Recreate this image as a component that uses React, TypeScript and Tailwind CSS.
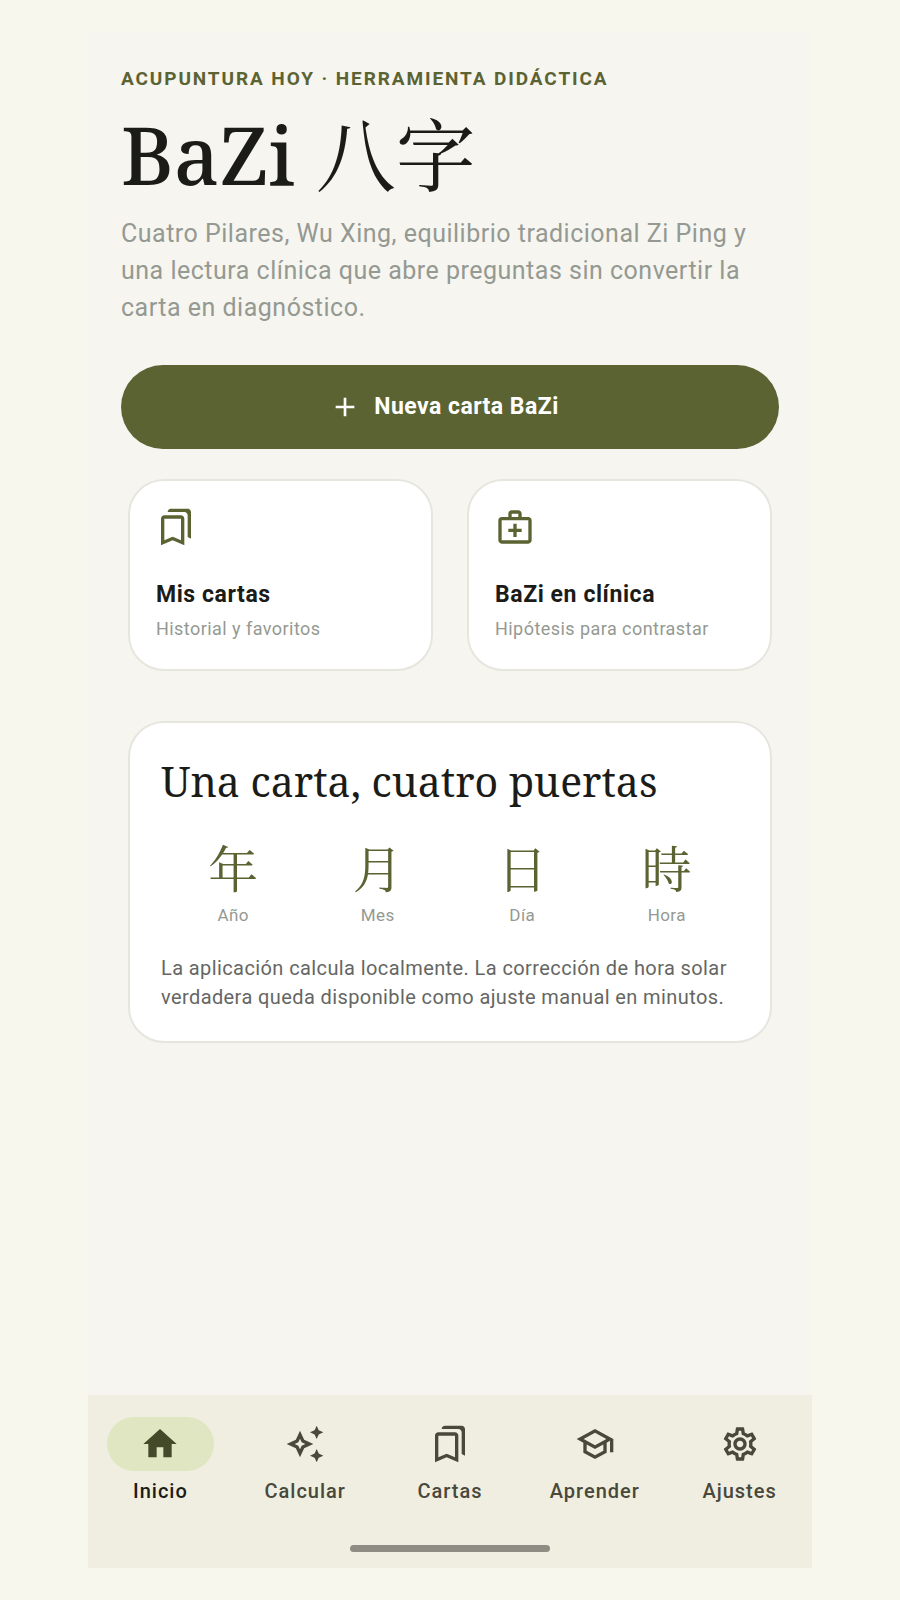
import type { IconType } from "react-icons";
import {
  MdAdd,
  MdHome,
  MdOutlineAutoAwesome,
  MdOutlineBookmarks,
  MdOutlineMedicalServices,
  MdOutlineSchool,
  MdOutlineSettings,
} from "react-icons/md";

const serif =
  "font-['Noto_Serif','Droid_Serif','DejaVu_Serif','Noto_Serif_CJK_SC','Noto_Sans_CJK_SC',serif]";

const pillars = [
  { glyph: "年", label: "Año" },
  { glyph: "月", label: "Mes" },
  { glyph: "日", label: "Día" },
  { glyph: "時", label: "Hora" },
];

const tabs: { icon: IconType; label: string; active?: boolean }[] = [
  { icon: MdHome, label: "Inicio", active: true },
  { icon: MdOutlineAutoAwesome, label: "Calcular" },
  { icon: MdOutlineBookmarks, label: "Cartas" },
  { icon: MdOutlineSchool, label: "Aprender" },
  { icon: MdOutlineSettings, label: "Ajustes" },
];

type ShortcutProps = {
  icon: IconType;
  title: string;
  subtitle: string;
};

const Shortcut = ({ icon: Icon, title, subtitle }: ShortcutProps) => {
  return (
    <button
      type="button"
      className="flex flex-1 flex-col items-start rounded-[36px] border-2 border-[#e6e6df] bg-white p-[26px] text-left"
    >
      <Icon className="size-10 text-[#5b6333]" />
      <span className="mt-8 text-[23px] font-bold leading-8 tracking-wide text-[#1b1c18]">
        {title}
      </span>
      <span className="mt-1 text-lg leading-7 tracking-wide text-[#949992]">{subtitle}</span>
    </button>
  );
};

const PillarsCard = () => {
  return (
    <section className="mx-[7px] mt-[50px] rounded-[36px] border-2 border-[#e6e6df] bg-white px-[31px] pb-[29px] pt-8">
      <h2 className={`text-[41px] leading-[52px] text-[#1b1c18] ${serif}`}>
        Una carta, cuatro puertas
      </h2>
      <ul className="mt-[30px] grid grid-cols-4">
        {pillars.map((p) => (
          <li key={p.label} className="flex flex-col items-center">
            <span lang="zh-Hans" className={`text-[50px] leading-[64px] text-[#5b6333] ${serif}`}>
              {p.glyph}
            </span>
            <span className="mt-0.5 text-[17px] leading-6 tracking-wide text-[#949992]">
              {p.label}
            </span>
          </li>
        ))}
      </ul>
      <p className="mt-[27px] text-xl leading-[29px] tracking-[0.02em] text-[#656663]">
        La aplicación calcula localmente. La corrección de hora solar verdadera queda disponible
        como ajuste manual en minutos.
      </p>
    </section>
  );
};

const BottomNav = () => {
  return (
    <nav className="bg-[#f0eee1] pb-4 pt-[22px]">
      <div className="grid grid-cols-5">
        {tabs.map(({ icon: Icon, label, active }) => (
          <a
            key={label}
            href={`#${label.toLowerCase()}`}
            aria-current={active ? "page" : undefined}
            className="flex flex-col items-center"
          >
            <span
              className={`flex h-[54px] w-[107px] items-center justify-center rounded-full ${
                active ? "bg-[#e1e6c2] text-[#444a29]" : "text-[#48483b]"
              }`}
            >
              <Icon className="size-10" />
            </span>
            <span
              className={`mt-1.5 text-xl font-medium leading-7 tracking-wider ${
                active ? "text-[#1b1c18]" : "text-[#48483b]"
              }`}
            >
              {label}
            </span>
          </a>
        ))}
      </div>
      <div className="mx-auto mt-10 h-[7px] w-[200px] rounded-full bg-[#8d8d83]" />
    </nav>
  );
};

export default function App() {
  return (
    <div className="flex min-h-screen bg-[#f7f7ee] px-[88px] py-8 font-['Roboto','Noto_Sans_CJK_SC',sans-serif]">
      <div className="flex flex-1 flex-col bg-[#f6f5f0]">
        <main className="flex-1 px-[33px] pt-[33px]">
          <p className="text-[19px] font-bold leading-7 tracking-widest text-[#5b6333]">
            ACUPUNTURA HOY · HERRAMIENTA DIDÁCTICA
          </p>
          <h1
            className={`mt-[7px] text-[80px] font-medium leading-[108px] text-[#1b1c18] ${serif}`}
          >
            BaZi{" "}
            <span lang="zh-Hans" className="font-normal">
              八字
            </span>
          </h1>
          <p className="mt-[7px] text-[25px] leading-[37px] tracking-[0.02em] text-[#949992]">
            Cuatro Pilares, Wu Xing, equilibrio tradicional Zi Ping y una lectura clínica que abre
            preguntas sin convertir la carta en diagnóstico.
          </p>
          <button
            type="button"
            className="mt-[39px] flex h-[84px] w-full items-center justify-center gap-[13px] rounded-full bg-[#5b6333] pl-7 pr-10 text-[23px] font-bold tracking-[0.02em] text-white"
          >
            <MdAdd className="size-8" />
            Nueva carta BaZi
          </button>
          <div className="mx-[7px] mt-[30px] flex gap-[34px]">
            <Shortcut icon={MdOutlineBookmarks} title="Mis cartas" subtitle="Historial y favoritos" />
            <Shortcut
              icon={MdOutlineMedicalServices}
              title="BaZi en clínica"
              subtitle="Hipótesis para contrastar"
            />
          </div>
          <PillarsCard />
        </main>
        <BottomNav />
      </div>
    </div>
  );
}
